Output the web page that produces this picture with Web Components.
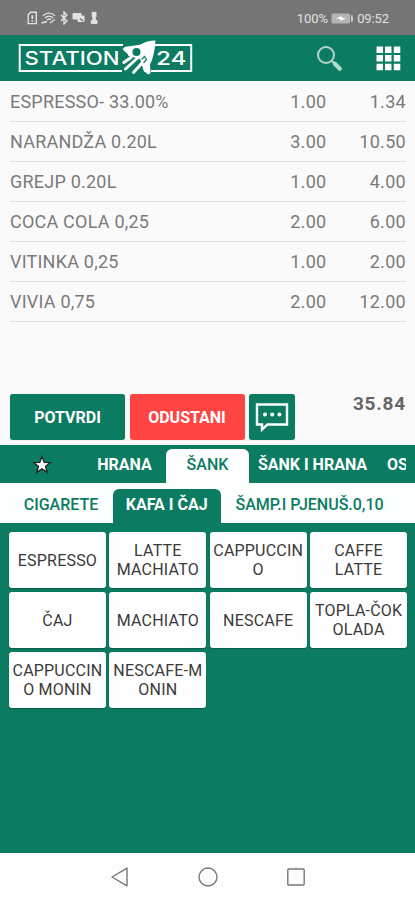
<!DOCTYPE html>
<html lang="sr">
<head>
<meta charset="UTF-8">
<meta name="viewport" content="width=device-width, initial-scale=1.0">
<title>Station 24</title>
<style>
  body {
    margin: 0;
    font-family: Roboto, "Noto Sans", sans-serif;
    --green: #0b7b61;
  }
</style>
</head>
<body>
<pos-app></pos-app>

<script>
class StatusBar extends HTMLElement {
  connectedCallback() {
    this.attachShadow({ mode: 'open' });
    this.shadowRoot.innerHTML = `
      <style>
        :host {
          display: flex;
          justify-content: space-between;
          align-items: center;
          height: 35px;
          padding: 0 26px 0 27px;
          box-sizing: border-box;
          background: #757575;
          color: #e2e2e2;
          font-size: 13px;
        }
        svg { display: block; }
        .right {
          display: flex;
          align-items: center;
          gap: 3px;
          padding-top: 1px;
        }
        .time { letter-spacing: -.1px; }
      </style>
      <svg width="74" height="14" viewBox="0 0 74 14" fill="none" stroke="#e2e2e2" stroke-width="1.4">
        <path d="M3.5 1.2H9.3V12.6H1.2V3.8Z"/>
        <path d="M5.3 4.2V8M5.3 9.2V10.8" stroke-width="1.7"/>
        <path d="M16 4.8Q22 -.5 28 4.8M18 7Q22 3.2 26 7M20 9Q22 7 24 9M14.5 12L20 10.5M23 12L28 8.5" stroke-width="1.3"/>
        <path d="M34 4L40 10L37 13V1L40 4L34 10"/>
        <path d="M46 2.5H54V5H57V10.5H51V8H46Z" fill="#e2e2e2" stroke-width="1"/>
        <path d="M53 7.5L56 10" stroke="#757575"/>
        <path d="M65.2 1.3H69V5.5L68.4 6.5V9.5H70V12.5H64.2V9.5H65.8V6.5L65.2 5.5Z" fill="#e2e2e2" stroke-width="1" stroke-linejoin="round"/>
      </svg>
      <div class="right">
        <span>100%</span>
        <svg width="23" height="11" viewBox="0 0 23 11">
          <rect x=".5" y=".5" width="18.5" height="10" rx="1.5" fill="#b5b5b5"/>
          <path d="M20 2.2H21.5Q22.5 5.5 21.5 8.8H20Z" fill="#cfcfcf"/>
          <path d="M5 5.5L10.5 3V4.8L15 5.6L9.5 7.8V6Z" fill="#fff"/>
        </svg>
        <span class="time">09:52</span>
      </div>
    `;
  }
}

class AppBar extends HTMLElement {
  connectedCallback() {
    this.attachShadow({ mode: 'open' });
    this.shadowRoot.innerHTML = `
      <style>
        :host {
          display: flex;
          align-items: center;
          height: 46px;
          padding: 0 14px 0 18px;
          box-sizing: border-box;
          background: var(--green);
        }
        svg { display: block; }
        .search { margin-left: auto; margin-right: 33px; }
        text {
          font-family: Inter, sans-serif;
          font-weight: 500;
          font-size: 18px;
          fill: #fff;
        }
      </style>
      <svg width="176" height="38" viewBox="0 0 176 38">
        <path d="M105 6H1.7V32H104M136 6H173.2V32H133" fill="none" stroke="#fff" stroke-width="2"/>
        <text x="6.5" y="25.6" textLength="95" lengthAdjust="spacingAndGlyphs">STATION</text>
        <text x="138" y="25.6" textLength="30.5" lengthAdjust="spacingAndGlyphs">24</text>
        <path d="M137.5 1.5Q129 1.5 122 5.8L107.5 7.8Q104.5 8.8 104.8 10.5L110 15.5L110.5 18L124 31L130.5 35.5L132.5 34L132 25.5Q136.5 17 137.5 1.5Z" fill="#fff"/>
        <circle cx="118.5" cy="13" r="4" fill="var(--green)"/>
        <path d="M109 16.5L122 20L126 33L118 38L103 30Z" fill="var(--green)"/>
        <path d="M113 18.5L105.8 23.5M119.5 19L107.5 30M124 24L115.5 33.5" stroke="#fff" stroke-width="3" stroke-linecap="round"/>
        <path d="M123.5 20.5L126.5 17.5L128.5 20.5L125.5 24" fill="none" stroke="var(--green)" stroke-width="1.2"/>
      </svg>
      <svg class="search" width="27" height="27" viewBox="0 0 27 27" fill="none">
        <circle cx="10" cy="10" r="8" stroke="#b4d6cd" stroke-width="2"/>
        <path d="M15.5 15.5L18.5 18.5" stroke="#b4d6cd" stroke-width="2"/>
        <path d="M18.8 18.8L23.8 23.8" stroke="#b4d6cd" stroke-width="4.2" stroke-linecap="round"/>
      </svg>
      <svg width="25" height="25" viewBox="0 0 25 25" fill="#fff">
        <path d="M.5 .5h6.5v6.5H.5zM9 .5h6.5v6.5H9zM17.8 .5h6.5v6.5h-6.5zM.5 9h6.5v6.5H.5zM9 9h6.5v6.5H9zM17.8 9h6.5v6.5h-6.5zM.5 17.8h6.5v6.5H.5zM9 17.8h6.5v6.5H9zM17.8 17.8h6.5v6.5h-6.5z"/>
      </svg>
    `;
  }
}

class OrderRow extends HTMLElement {
  connectedCallback() {
    this.attachShadow({ mode: 'open' });
    this.shadowRoot.innerHTML = `
      <style>
        :host {
          display: grid;
          grid-template-columns: 1fr 80px 79.5px;
          align-items: center;
          height: 40px;
          box-sizing: border-box;
          border-bottom: 1px solid #e2e2e2;
          color: #7a7a7a;
          font-size: 18px;
          white-space: nowrap;
        }
        .name { letter-spacing: .22px; }
        .num {
          text-align: right;
          letter-spacing: .3px;
        }
      </style>
      <span class="name"><slot></slot></span>
      <span class="num">${this.getAttribute('qty')}</span>
      <span class="num">${this.getAttribute('total')}</span>
    `;
  }
}

class PosButton extends HTMLElement {
  connectedCallback() {
    this.attachShadow({ mode: 'open' });
    this.shadowRoot.innerHTML = `
      <style>
        :host {
          display: flex;
          align-items: center;
          justify-content: center;
          width: 115px;
          height: 46px;
          border-radius: 3px;
          background: var(--green);
          color: #fff;
          font-size: 16px;
          font-weight: 700;
          box-shadow: 0 0 1px rgba(0, 0, 0, .25);
        }
        :host([kind="danger"]) { background: #ff4444; }
        :host([kind="icon"]) { width: 46px; }
      </style>
      <slot></slot>
    `;
  }
}

class OrderPanel extends HTMLElement {
  connectedCallback() {
    this.attachShadow({ mode: 'open' });
    this.shadowRoot.innerHTML = `
      <style>
        :host {
          display: flex;
          flex-direction: column;
          height: 364px;
          padding: 1px 9px 5px 10px;
          box-sizing: border-box;
          background: #fafafa;
        }
        .actions {
          display: flex;
          gap: 4.5px;
          margin-top: auto;
        }
        .total {
          margin-left: auto;
          color: #666;
          font-size: 19px;
          line-height: 20px;
          font-weight: 700;
          letter-spacing: .8px;
        }
      </style>
      <div>
        <order-row qty="1.00" total="1.34">ESPRESSO- 33.00%</order-row>
        <order-row qty="3.00" total="10.50">NARANDŽA 0.20L</order-row>
        <order-row qty="1.00" total="4.00">GREJP 0.20L</order-row>
        <order-row qty="2.00" total="6.00">COCA COLA 0,25</order-row>
        <order-row qty="1.00" total="2.00">VITINKA 0,25</order-row>
        <order-row qty="2.00" total="12.00">VIVIA 0,75</order-row>
      </div>
      <div class="actions">
        <pos-button>POTVRDI</pos-button>
        <pos-button kind="danger">ODUSTANI</pos-button>
        <pos-button kind="icon">
          <svg width="34" height="32" viewBox="0 0 34 32">
            <path d="M2 3.5H32V23.5H12.5L7 28.5V23.5H2Z" fill="none" stroke="#fff" stroke-width="2.4"/>
            <circle cx="10" cy="13.5" r="2" fill="#fff"/>
            <circle cx="17.2" cy="13.5" r="2" fill="#fff"/>
            <circle cx="24.4" cy="13.5" r="2" fill="#fff"/>
          </svg>
        </pos-button>
        <span class="total">35.84</span>
      </div>
    `;
  }
}

class CategoryTabs extends HTMLElement {
  connectedCallback() {
    this.attachShadow({ mode: 'open' });
    this.shadowRoot.innerHTML = `
      <style>
        :host {
          display: block;
          height: 38px;
          padding-right: 9px;
          box-sizing: border-box;
          background: var(--green);
          color: #fff;
          --active-bg: #fff;
          --active-text: var(--green);
          --tab-weight: 500;
          font-size: 16px;
          font-weight: 700;
        }
        :host([level="sub"]) {
          height: 40px;
          background: #fdfefe;
          color: var(--green);
          --active-bg: var(--green);
          --active-text: #fff;
          --tab-weight: 700;
          font-weight: 500;
        }
        .strip {
          display: flex;
          align-items: flex-end;
          height: 100%;
          overflow: hidden;
        }
      </style>
      <div class="strip"><slot></slot></div>
    `;
  }
}

class CategoryTab extends HTMLElement {
  connectedCallback() {
    this.attachShadow({ mode: 'open' });
    this.shadowRoot.innerHTML = `
      <style>
        :host {
          display: flex;
          flex: none;
          align-items: center;
          justify-content: center;
          height: 34px;
          box-sizing: border-box;
          padding-bottom: 3px;
          white-space: nowrap;
        }
        :host([active]) {
          background: var(--active-bg);
          color: var(--active-text);
          font-weight: var(--tab-weight);
          border-radius: 6px 6px 0 0;
        }
      </style>
      <slot></slot>
    `;
  }
}

class ProductTile extends HTMLElement {
  connectedCallback() {
    this.attachShadow({ mode: 'open' });
    this.shadowRoot.innerHTML = `
      <style>
        :host {
          display: flex;
          align-items: center;
          justify-content: center;
          height: 56px;
          min-width: 0;
          box-sizing: border-box;
          border-radius: 3px;
          background: #fefefe;
          box-shadow: 0 1px 1px rgba(0, 0, 0, .25);
          color: #3a3a3a;
          font-size: 16px;
          line-height: 19px;
          letter-spacing: .2px;
          text-align: center;
          white-space: nowrap;
        }
      </style>
      <span><slot></slot></span>
    `;
  }
}

class NavBar extends HTMLElement {
  connectedCallback() {
    this.attachShadow({ mode: 'open' });
    this.shadowRoot.innerHTML = `
      <style>
        :host {
          display: flex;
          align-items: center;
          justify-content: center;
          gap: 68px;
          height: 47px;
          background: #fdfdfd;
        }
      </style>
      <svg width="20" height="20" viewBox="0 0 20 20" fill="none" stroke="#777" stroke-width="1.4"><path d="M17 1.2V18.8L2 10Z" stroke-linejoin="round"/></svg>
      <svg width="20" height="20" viewBox="0 0 20 20" fill="none" stroke="#777" stroke-width="1.4"><circle cx="10" cy="10" r="9"/></svg>
      <svg width="20" height="20" viewBox="0 0 20 20" fill="none" stroke="#777" stroke-width="1.4"><rect x="1.8" y="2" width="16.4" height="16" rx="1"/></svg>
    `;
  }
}

class PosApp extends HTMLElement {
  connectedCallback() {
    this.attachShadow({ mode: 'open' });
    this.shadowRoot.innerHTML = `
      <style>
        :host {
          display: flex;
          flex-direction: column;
          width: 415px;
          height: 900px;
          overflow: hidden;
          background: var(--green);
        }
        .products {
          display: grid;
          grid-template-columns: repeat(4, 1fr);
          gap: 4px 3.5px;
          align-content: start;
          flex: 1;
          padding: 9px 8px 0 9px;
        }
      </style>
      <status-bar></status-bar>
      <app-bar></app-bar>
      <order-panel></order-panel>
      <category-tabs>
        <category-tab style="width: 83px">
          <svg width="20" height="20" viewBox="0 0 20 20"><path d="M10 1.5L12.2 7.4L18.3 7.6L13.5 11.4L15.2 17.4L10 13.9L4.8 17.4L6.5 11.4L1.7 7.6L7.8 7.4Z" fill="#fff" stroke="#222" stroke-width="1.3"/></svg>
        </category-tab>
        <category-tab style="width: 83px">HRANA</category-tab>
        <category-tab active style="width: 83px">ŠANK</category-tab>
        <category-tab style="width: 127px">ŠANK I HRANA</category-tab>
        <category-tab style="padding-left: 11px">OS</category-tab>
      </category-tabs>
      <category-tabs level="sub">
        <category-tab style="width: 113px; padding-left: 9px">CIGARETE</category-tab>
        <category-tab active style="width: 107.5px">KAFA I ČAJ</category-tab>
        <category-tab style="padding-left: 15px">ŠAMP.I PJENUŠ.0,10</category-tab>
      </category-tabs>
      <div class="products">
        <product-tile>ESPRESSO</product-tile>
        <product-tile>LATTE<br>MACHIATO</product-tile>
        <product-tile>CAPPUCCIN<br>O</product-tile>
        <product-tile>CAFFE<br>LATTE</product-tile>
        <product-tile>ČAJ</product-tile>
        <product-tile>MACHIATO</product-tile>
        <product-tile>NESCAFE</product-tile>
        <product-tile>TOPLA-ČOK<br>OLADA</product-tile>
        <product-tile>CAPPUCCIN<br>O MONIN</product-tile>
        <product-tile>NESCAFE-M<br>ONIN</product-tile>
      </div>
      <nav-bar></nav-bar>
    `;
  }
}

customElements.define('status-bar', StatusBar);
customElements.define('app-bar', AppBar);
customElements.define('order-row', OrderRow);
customElements.define('pos-button', PosButton);
customElements.define('order-panel', OrderPanel);
customElements.define('category-tabs', CategoryTabs);
customElements.define('category-tab', CategoryTab);
customElements.define('product-tile', ProductTile);
customElements.define('nav-bar', NavBar);
customElements.define('pos-app', PosApp);
</script>
</body>
</html>
